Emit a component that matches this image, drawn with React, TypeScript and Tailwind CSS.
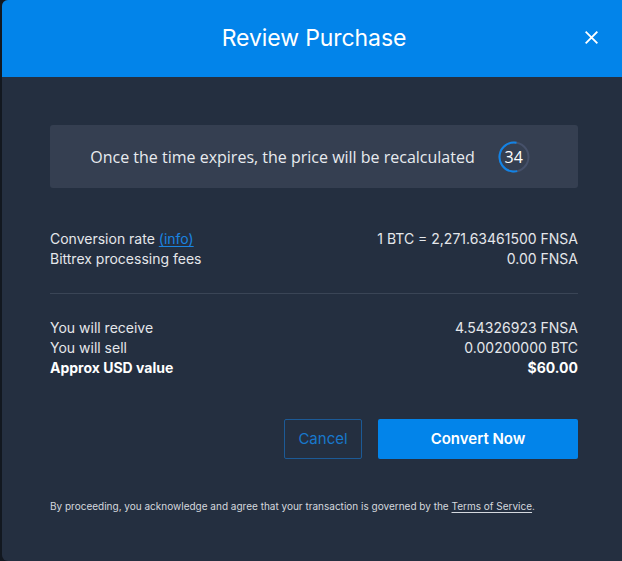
import React from "react";

export default function App() {
  const r = 14.5;
  const c = 2 * Math.PI * r;
  const frac = 0.56;
  return (
    <div className="w-[622px] h-[561px] overflow-hidden bg-[#121820] pl-[2px]" style={{ fontFamily: "Inter, 'Noto Sans', sans-serif" }}>
      <div className="w-[624px] h-[561px] bg-[#242f40] rounded-l-[6px] overflow-hidden flex flex-col">
        <div className="h-[77px] bg-[#0284ea] flex items-center justify-center relative shrink-0">
          <h1 className="text-[23px] text-white font-normal leading-none tracking-[-0.1px]">Review Purchase</h1>
          <button className="absolute right-[27px] top-[30px] w-[15px] h-[15px] flex items-center justify-center">
            <svg width="15" height="15" viewBox="0 0 16 16" fill="none" stroke="white" strokeWidth="2" strokeLinecap="square">
              <path d="M2.5 2.5 L13.5 13.5 M13.5 2.5 L2.5 13.5" />
            </svg>
          </button>
        </div>
        <div className="pl-[48px] pr-[48px] flex flex-col">
          <div className="mt-[48px] h-[63px] bg-[#353f51] rounded-[3px] flex items-center justify-center gap-[23px] pr-[8px]">
            <span className="text-[16px] text-[#e8ebef] leading-none" style={{ fontFamily: "'Open Sans', sans-serif" }}>
              Once the time expires, the price will be recalculated
            </span>
            <div className="relative w-[32px] h-[32px] flex items-center justify-center">
              <svg width="32" height="32" viewBox="0 0 32 32" className="absolute inset-0">
                <circle cx="16" cy="16" r={r} fill="none" stroke="#46516a" strokeWidth="2" />
                <circle
                  cx="16"
                  cy="16"
                  r={r}
                  fill="none"
                  stroke="#1283e6"
                  strokeWidth="2"
                  strokeDasharray={`${c * frac} ${c}`}
                  transform="rotate(-80 16 16) scale(1 -1) translate(0 -32)"
                />
              </svg>
              <span className="relative text-[16px] text-white leading-none" style={{ fontFamily: "'Open Sans', sans-serif" }}>34</span>
            </div>
          </div>

          <div className="mt-[41px] text-[14px] leading-[20px] text-[#e4e7eb]">
            <div className="flex justify-between">
              <span>
                Conversion rate <a className="text-[#1a84e0] underline underline-offset-2">(info)</a>
              </span>
              <span>1 BTC = 2,271.63461500 FNSA</span>
            </div>
            <div className="flex justify-between">
              <span>Bittrex processing fees</span>
              <span>0.00 FNSA</span>
            </div>
          </div>

          <div className="mt-[24px] h-px bg-[#3a4556]" />

          <div className="mt-[24px] text-[14px] leading-[20px] text-[#e4e7eb]">
            <div className="flex justify-between">
              <span>You will receive</span>
              <span>4.54326923 FNSA</span>
            </div>
            <div className="flex justify-between">
              <span>You will sell</span>
              <span>0.00200000 BTC</span>
            </div>
            <div className="flex justify-between font-bold text-white">
              <span>Approx USD value</span>
              <span>$60.00</span>
            </div>
          </div>

          <div className="mt-[41px] flex justify-end gap-[16px]">
            <button className="w-[78px] h-[40px] border border-[#1c5a96] rounded-[2px] text-[15px] text-[#1878cc]">
              Cancel
            </button>
            <button className="w-[200px] h-[40px] bg-[#0284ea] rounded-[2px] text-[15px] font-semibold text-white">
              Convert Now
            </button>
          </div>

          <p className="mt-[41px] text-[10px] leading-[12px] text-[#d4d8de]">
            By proceeding, you acknowledge and agree that your transaction is governed by the{" "}
            <a className="underline underline-offset-2">Terms of Service</a>.
          </p>
        </div>
      </div>
    </div>
  );
}
